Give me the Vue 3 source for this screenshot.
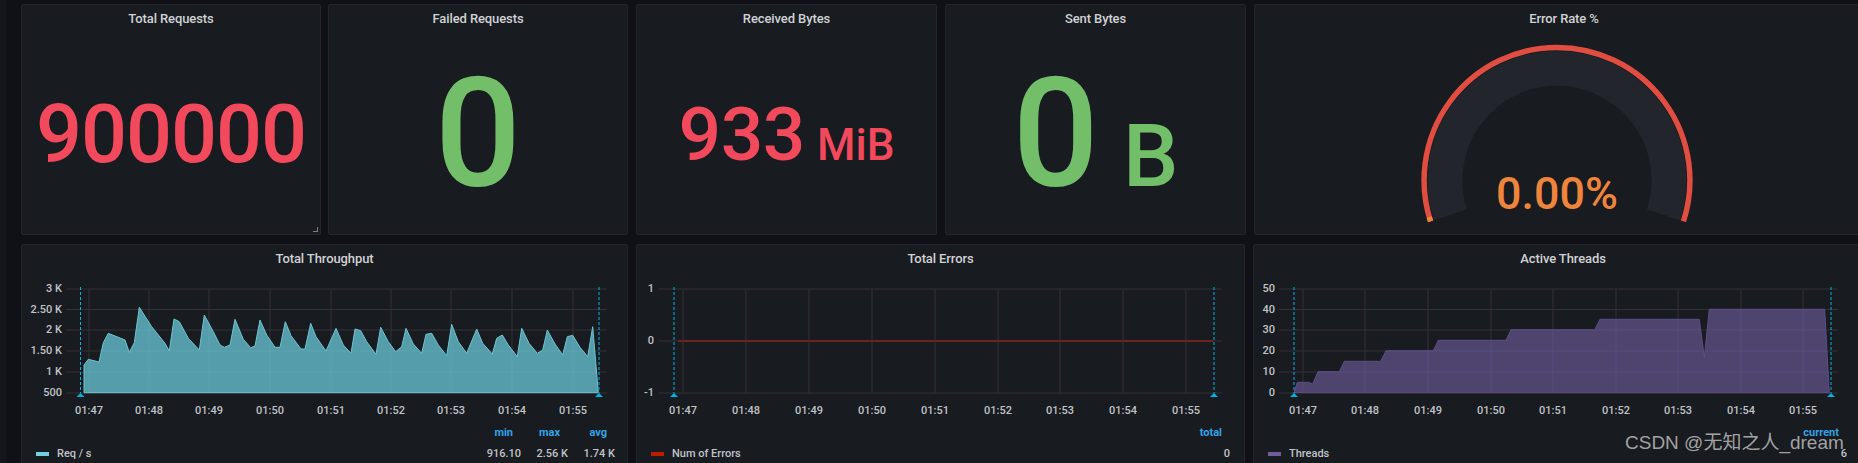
<template>
  <div class="dash">
    <div class="row row-top">
      <section class="panel stat first" style="--w: 300px">
        <h3 class="title">Total Requests</h3>
        <div class="stat-body red"><div><span class="v81">900000</span></div></div>
        <i class="resize"></i>
      </section>
      <section class="panel stat" style="--w: 300px">
        <h3 class="title">Failed Requests</h3>
        <div class="stat-body green"><div><span class="v153">0</span></div></div>
      </section>
      <section class="panel stat" style="--w: 301px">
        <h3 class="title">Received Bytes</h3>
        <div class="stat-body red"><div><span class="v76">933</span><span class="u45">MiB</span></div></div>
      </section>
      <section class="panel stat" style="--w: 301px">
        <h3 class="title">Sent Bytes</h3>
        <div class="stat-body green"><div><span class="v153">0</span><span class="u90">B</span></div></div>
      </section>
      <section class="panel gauge">
        <h3 class="title">Error Rate %</h3>
        <svg class="gauge-svg" width="300" height="200" viewBox="1407 35 300 200">
          <path :d="arc(112.5, 162, 18)" fill="none" stroke="#22252b" stroke-width="35" />
          <path :d="arc(133.5, 162, 18)" fill="none" stroke="#e24d42" stroke-width="5.5" />
          <path :d="arc(133.5, 162, 164)" fill="none" stroke="#ef843c" stroke-width="5.5" />
          <text x="1557" y="210" text-anchor="middle" class="gauge-val">0.00%</text>
        </svg>
      </section>
    </div>
    <div class="row row-bottom">
      <section v-for="g in graphs" :key="g.title" class="panel graph" :style="{ '--w': g.width + 'px' }">
        <h3 class="title">{{ g.title }}</h3>
        <svg class="chart" :width="g.width" height="140" :viewBox="`${g.left} 282 ${g.width} 140`">
          <line v-for="y in g.yTicks" :key="'h' + y.y" :x1="g.x0" :x2="g.x1" :y1="y.y" :y2="y.y" class="grid" />
          <line v-for="t in g.xTicks" :key="'v' + t" :x1="t" :x2="t" y1="289" y2="393" class="grid" />
          <path v-if="g.area" :d="toPath(g.area)" :fill="g.color" :fill-opacity="g.opacity" :stroke="g.stroke" stroke-width="1" />
          <line v-if="g.flat" :x1="g.flat[0]" :x2="g.flat[1]" y1="341" y2="341" stroke="#6b2417" stroke-width="2" />
          <text v-for="y in g.yTicks" :key="'l' + y.y" :x="g.labelX" :y="y.y + 3" text-anchor="end" class="tick">{{ y.label }}</text>
          <text v-for="(t, i) in g.xTicks" :key="'t' + t" :x="t" y="414" text-anchor="middle" class="tick">{{ times[i] }}</text>
          <g v-for="a in g.marks" :key="a">
            <line :x1="a" :x2="a" y1="287" y2="393" class="mark" />
            <path :d="`M${a} 393 l4 4 h-8 z`" fill="#00b4e0" />
          </g>
        </svg>
        <table class="legend" :style="{ width: g.width - g.legendRight + 'px' }">
          <thead>
            <tr><th></th><th v-for="c in g.cols" :key="c.name" class="head">{{ c.name }}</th></tr>
          </thead>
          <tbody>
            <tr>
              <td class="series"><i class="swatch" :style="{ background: g.color }"></i>{{ g.series }}</td>
              <td v-for="c in g.cols" :key="c.name" class="num">{{ c.value }}</td>
            </tr>
          </tbody>
        </table>
      </section>
    </div>
    <div class="watermark">CSDN @无知之人_dream</div>
  </div>
</template>

<script setup>
const times = ['01:47', '01:48', '01:49', '01:50', '01:51', '01:52', '01:53', '01:54', '01:55']

// traced from the reference, page px * 3 (y measured from 240)
const throughput = [
  [252, 458], [252, 375], [265, 358], [297, 366], [310, 308], [325, 280], [375, 300], [388, 337], [403, 308], [418, 202],
  [455, 260], [495, 310], [508, 333], [522, 237], [538, 245], [565, 295], [598, 330], [613, 225], [640, 275],
  [660, 315], [673, 322], [690, 315], [705, 238], [730, 298], [752, 323], [765, 318], [780, 240], [800, 285],
  [825, 322], [840, 322], [856, 245], [873, 287], [903, 327], [915, 327], [932, 250], [948, 290], [978, 333],
  [1008, 265], [1030, 315], [1053, 340], [1065, 267], [1082, 272], [1100, 305], [1128, 343], [1142, 262],
  [1165, 305], [1187, 335], [1205, 320], [1218, 265], [1240, 312], [1265, 340], [1278, 283], [1295, 280],
  [1315, 315], [1340, 347], [1355, 253], [1375, 305], [1400, 340], [1430, 267], [1448, 310], [1477, 342],
  [1490, 295], [1507, 285], [1525, 315], [1552, 350], [1565, 265], [1587, 310], [1612, 340], [1628, 330],
  [1642, 270], [1665, 312], [1688, 345], [1702, 290], [1718, 286], [1740, 322], [1763, 350], [1778, 260], [1795, 458],
].map(([x, y]) => [x / 3, 240 + y / 3])

const threads = [
  [1294, 392.7], [1297.3, 382.3], [1308.3, 382.3], [1312.7, 384], [1318, 371.7], [1339.3, 371.7], [1344.3, 361.3],
  [1380.7, 361.3], [1386, 350.7], [1433.3, 350.7], [1438.3, 340.3], [1506, 340.3], [1511, 329.7], [1594.7, 329.7],
  [1600, 319.3], [1699.3, 319.3], [1704.3, 357.3], [1709.3, 309.3], [1824.7, 309.3], [1829.3, 392.7],
]

const graphs = [
  {
    title: 'Total Throughput', width: 607, left: 21, x0: 66, x1: 607, labelX: 62, legendRight: 14,
    yTicks: [
      { y: 289, label: '3 K' }, { y: 309.5, label: '2.50 K' }, { y: 330, label: '2 K' },
      { y: 351, label: '1.50 K' }, { y: 372, label: '1 K' }, { y: 393, label: '500' },
    ],
    xTicks: [89, 149, 209, 270, 331, 391, 451, 512, 573],
    marks: [80.5, 599],
    area: throughput, opacity: 0.72, stroke: '#6fc4d2',
    series: 'Req / s', color: '#6ed0e0',
    cols: [{ name: 'min', value: '916.10' }, { name: 'max', value: '2.56 K' }, { name: 'avg', value: '1.74 K' }],
  },
  {
    title: 'Total Errors', width: 609, left: 636, x0: 659, x1: 1222, labelX: 654, legendRight: 16,
    yTicks: [{ y: 289, label: '1' }, { y: 341, label: '0' }, { y: 393, label: '-1' }],
    xTicks: [683, 746, 809, 872, 935, 998, 1060, 1123, 1186],
    marks: [674, 1214],
    flat: [678, 1213],
    series: 'Num of Errors', color: '#bf1b00',
    cols: [{ name: 'total', value: '0' }],
  },
  {
    title: 'Active Threads', width: 620, left: 1253, x0: 1279, x1: 1838, labelX: 1275, legendRight: 27,
    yTicks: [
      { y: 289, label: '50' }, { y: 309.5, label: '40' }, { y: 330, label: '30' },
      { y: 351, label: '20' }, { y: 372, label: '10' }, { y: 393, label: '0' },
    ],
    xTicks: [1303, 1365, 1428, 1491, 1553, 1616, 1678, 1741, 1803],
    marks: [1294, 1831],
    area: threads, opacity: 0.62, stroke: '#5d4d87',
    series: 'Threads', color: '#705da0',
    cols: [{ name: 'current', value: '6' }],
  },
]

function toPath(pts) {
  return 'M' + pts.map(p => p[0].toFixed(1) + ' ' + p[1].toFixed(1)).join('L') + 'Z'
}

// screen angles in degrees (y down), drawn clockwise from -> to
function arc(r, from, to) {
  const cx = 1557
  const cy = 181
  const pt = a => {
    const rad = (a * Math.PI) / 180
    return `${(cx + r * Math.cos(rad)).toFixed(2)} ${(cy + r * Math.sin(rad)).toFixed(2)}`
  }
  const sweep = (to - from + 360) % 360
  return `M${pt(from)} A${r} ${r} 0 ${sweep > 180 ? 1 : 0} 1 ${pt(to)}`
}
</script>

<style scoped>
.dash {
  position: relative;
  width: 1858px;
  height: 463px;
  overflow: hidden;
  box-sizing: border-box;
  padding: 4px 0 0 21px;
  display: flex;
  flex-direction: column;
  gap: 9px;
  background: linear-gradient(90deg, #15161b 0 6px, #101116 6px);
  font-family: Roboto, "Liberation Sans", sans-serif;
}

.row {
  display: flex;
  flex-shrink: 0;
}

.row-top {
  height: 231px;
  gap: 8px;
}

.row-bottom {
  height: 230px;
  gap: 8px;
}

.panel {
  position: relative;
  flex: 0 0 var(--w);
  width: var(--w);
  box-sizing: border-box;
  background: #181b1f;
  border: 1px solid #22252a;
  border-radius: 2px;
  display: flex;
  flex-direction: column;
}

.first {
  margin-right: -1px;
}

.gauge {
  flex: 0 0 620px;
}

.title {
  margin: 0;
  height: 29px;
  line-height: 28px;
  text-align: center;
  font-size: 13px;
  font-weight: 500;
  letter-spacing: -0.1px;
  color: #d0d2d6;
}

.stat-body {
  flex: 1;
  display: flex;
  align-items: center;
  justify-content: center;
  font-weight: 500;
  line-height: 1;
  white-space: nowrap;
}

.red { color: #f2495c; }
.green { color: #73bf69; }

.v81 { font-size: 81px; letter-spacing: -1px; }
.v153 { font-size: 152px; }
.v76 { font-size: 75px; letter-spacing: -0.5px; }
.u45 { font-size: 44px; margin-left: 12px; }
.u90 { font-size: 88px; margin-left: 24px; }

.resize {
  position: absolute;
  right: 2px;
  bottom: 2px;
  width: 4px;
  height: 4px;
  border-right: 1px solid #7b7e84;
  border-bottom: 1px solid #7b7e84;
}

.gauge-svg {
  display: block;
  margin: 1px 0 0 152px;
}

.gauge-val {
  font-size: 45px;
  font-weight: 500;
  fill: #ef843c;
}

.graph .title {
  height: 37px;
}

.chart {
  display: block;
  margin-left: -1px;
  flex-shrink: 0;
}

.grid {
  stroke: #303337;
  stroke-width: 1;
}

.mark {
  stroke: #00b4e0;
  stroke-width: 1;
  stroke-dasharray: 3 2;
}

.tick {
  font-size: 11px;
  font-weight: 500;
  fill: #c0c3c8;
}

.legend {
  border-collapse: collapse;
  font-size: 11px;
  color: #c0c3c8;
  flex-shrink: 0;
}

.legend th,
.legend td {
  padding: 0;
  height: 21px;
}

.head {
  width: 39px;
  padding-right: 8px !important;
  text-align: right;
  font-weight: 700;
  color: #33a2e5;
}

.num {
  text-align: right;
  font-weight: 500;
}

.series {
  padding-left: 14px !important;
  font-weight: 500;
  white-space: nowrap;
}

.swatch {
  display: inline-block;
  width: 13px;
  height: 4px;
  margin-right: 8px;
  vertical-align: middle;
}

.watermark {
  position: absolute;
  left: 1625px;
  top: 432px;
  font-family: "Liberation Sans", "Noto Sans CJK SC", sans-serif;
  font-size: 19px;
  line-height: 22px;
  color: rgba(200, 200, 200, 0.8);
  white-space: nowrap;
}
</style>
